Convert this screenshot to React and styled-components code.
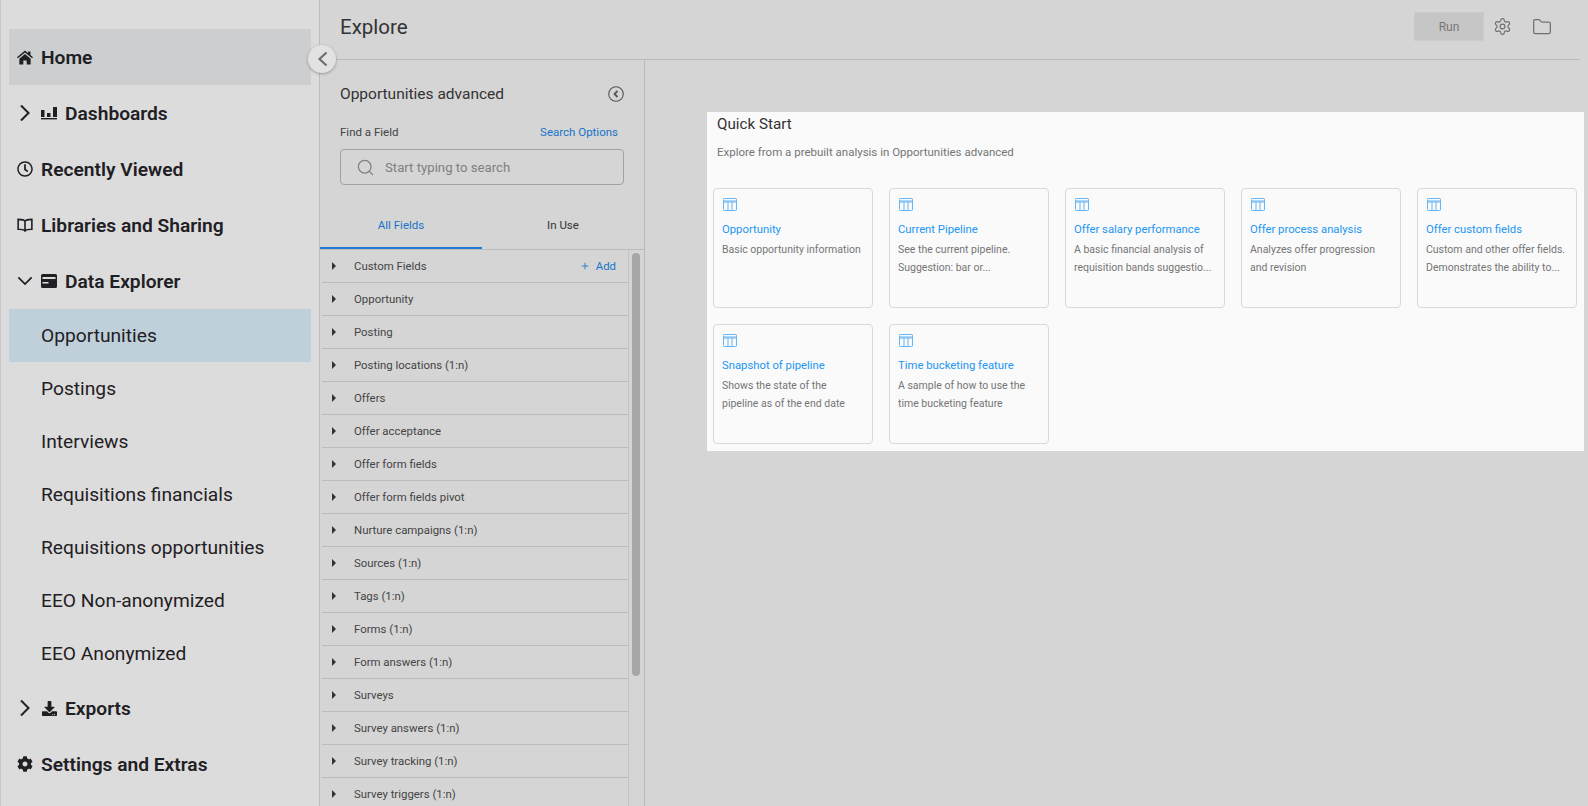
import React from 'react'
import styled, { createGlobalStyle } from 'styled-components'
import { FaRegClock, FaCog, FaDownload } from 'react-icons/fa'
import { LuSearch, LuSettings, LuFolder, LuPlus } from 'react-icons/lu'

const GlobalStyle = createGlobalStyle`
  html, body {
    margin: 0;
    height: 100%;
    overflow: hidden;
    background: #d5d5d5;
    font-family: Roboto, "Liberation Sans", sans-serif;
  }
  #root { height: 100%; }
  * { box-sizing: border-box; }
`

const fields = [
  'Custom Fields', 'Opportunity', 'Posting', 'Posting locations (1:n)', 'Offers', 'Offer acceptance',
  'Offer form fields', 'Offer form fields pivot', 'Nurture campaigns (1:n)', 'Sources (1:n)', 'Tags (1:n)',
  'Forms (1:n)', 'Form answers (1:n)', 'Surveys', 'Survey answers (1:n)', 'Survey tracking (1:n)', 'Survey triggers (1:n)',
]

const cards = [
  { title: 'Opportunity', text: 'Basic opportunity information' },
  { title: 'Current Pipeline', text: 'See the current pipeline. Suggestion: bar or...' },
  { title: 'Offer salary performance', text: 'A basic financial analysis of requisition bands suggestio...' },
  { title: 'Offer process analysis', text: 'Analyzes offer progression and revision' },
  { title: 'Offer custom fields', text: 'Custom and other offer fields. Demonstrates the ability to...' },
  { title: 'Snapshot of pipeline', text: 'Shows the state of the pipeline as of the end date' },
  { title: 'Time bucketing feature', text: 'A sample of how to use the time bucketing feature' },
]

const explores = ['Opportunities', 'Postings', 'Interviews', 'Requisitions financials', 'Requisitions opportunities', 'EEO Non-anonymized', 'EEO Anonymized']

const ChevronRight = () => (
  <svg width="12" height="18" viewBox="0 0 12 18" fill="none" stroke="currentColor" strokeWidth="2">
    <path d="M2 1.500l7.500 7.500-7.500 7.500" />
  </svg>
)

const ChevronDown = () => (
  <svg width="18" height="12" viewBox="0 0 18 12" fill="none" stroke="currentColor" strokeWidth="2">
    <path d="M1.500 2l7.500 7.500 7.500-7.500" />
  </svg>
)

const ChevronLeft = () => (
  <svg width="11" height="16" viewBox="0 0 11 16" fill="none" stroke="currentColor" strokeWidth="2.200">
    <path d="M9.500 1.500l-7 6.500 7 6.500" />
  </svg>
)

const HomeIcon = () => (
  <svg width="17" height="15" viewBox="0 0 17 15" fill="currentColor">
    <path d="M8.500 0l3.300 2.800V1h2.500v3.900L17 7.200l-1 1.200-7.500-6.300L1 8.400 0 7.200zM2.500 8.800l6-5 6 5V15h-4.200v-4.300H6.700V15H2.500z" />
  </svg>
)

const BarsIcon = () => (
  <svg width="16" height="14" viewBox="0 0 16 14" fill="currentColor">
    <rect x="0" y="4" width="3.500" height="7" />
    <rect x="6" y="7" width="3.500" height="4" />
    <rect x="12" y="1" width="4" height="10" />
    <rect x="0" y="12" width="16" height="1.400" />
  </svg>
)

const BookIcon = () => (
  <svg width="17" height="15" viewBox="0 0 17 15" fill="none" stroke="currentColor" strokeWidth="1.700">
    <path d="M8.500 3C7.500 1.500 5.500 1 1.200 1v10.500c4 0 6 .3 7.300 1.800 1.300-1.500 3.300-1.800 7.300-1.800V1C11.500 1 9.500 1.500 8.500 3zM8.500 3v10" />
  </svg>
)

const CardIcon = () => (
  <svg width="16" height="14" viewBox="0 0 16 14" fill="currentColor">
    <path d="M1.500 0h13A1.500 1.500 0 0 1 16 1.500v11a1.500 1.500 0 0 1-1.500 1.500h-13A1.500 1.500 0 0 1 0 12.500v-11A1.500 1.500 0 0 1 1.500 0zM1.500 3v2h13V3zM1.500 8v1.500h6V8z" fillRule="evenodd" />
  </svg>
)

const TableIcon = () => (
  <svg width="14" height="13" viewBox="0 0 14 13" fill="none" stroke="currentColor" strokeWidth="1">
    <rect x="0.500" y="0.500" width="13" height="12" rx="0.800" />
    <path d="M0.500 3h13M0.500 4h13M5 4v8.500M9 4v8.500" />
  </svg>
)

const CircleBack = () => (
  <svg width="16" height="16" viewBox="0 0 16 16" fill="none" stroke="currentColor">
    <circle cx="8" cy="8" r="7.300" strokeWidth="1.100" />
    <path d="M9.500 5l-3 3 3 3" strokeWidth="1.800" />
  </svg>
)

export default function App() {
  return (
    <Page>
      <GlobalStyle />
      <Sidebar>
        <NavRow $active><NavIcon><HomeIcon /></NavIcon>Home</NavRow>
        <NavRow><Caret><ChevronRight /></Caret><NavIcon><BarsIcon /></NavIcon>Dashboards</NavRow>
        <NavRow><NavIcon><FaRegClock size={16} /></NavIcon>Recently Viewed</NavRow>
        <NavRow><NavIcon><BookIcon /></NavIcon>Libraries and Sharing</NavRow>
        <NavRow><Caret><ChevronDown /></Caret><NavIcon><CardIcon /></NavIcon>Data Explorer</NavRow>
        {explores.map((name, i) => <SubRow key={name} $selected={i === 0}>{name}</SubRow>)}
        <NavRow><Caret><ChevronRight /></Caret><NavIcon><FaDownload size={15} /></NavIcon>Exports</NavRow>
        <NavRow><NavIcon><FaCog size={16} /></NavIcon>Settings and Extras</NavRow>
        <Collapse><ChevronLeft /></Collapse>
      </Sidebar>
      <Main>
        <Header>
          <Title>Explore</Title>
          <HeaderTools>
            <RunButton>Run</RunButton>
            <ToolIcon><LuSettings size={19} strokeWidth={1.5} /></ToolIcon>
            <ToolIcon><LuFolder size={20} strokeWidth={1.5} /></ToolIcon>
          </HeaderTools>
        </Header>
        <Body>
          <FieldPanel>
            <PanelHead>
              <PanelTitle>Opportunities advanced</PanelTitle>
              <BackIcon><CircleBack /></BackIcon>
            </PanelHead>
            <FindRow>
              <span>Find a Field</span>
              <BlueLink>Search Options</BlueLink>
            </FindRow>
            <SearchBox>
              <LuSearch size={19} strokeWidth={1.6} />
              <span>Start typing to search</span>
            </SearchBox>
            <Tabs>
              <Tab $active>All Fields</Tab>
              <Tab>In Use</Tab>
            </Tabs>
            <FieldArea>
              <FieldList>
                {fields.map((name, i) => (
                  <FieldRow key={name}>
                    <Arrow />
                    <FieldName>{name}</FieldName>
                    {i === 0 && <AddLink><LuPlus size={10} strokeWidth={2} />Add</AddLink>}
                  </FieldRow>
                ))}
              </FieldList>
              <ScrollTrack><ScrollThumb /></ScrollTrack>
            </FieldArea>
          </FieldPanel>
          <Content>
            <QuickStart>
              <QuickTitle>Quick Start</QuickTitle>
              <QuickSub>Explore from a prebuilt analysis in Opportunities advanced</QuickSub>
              <CardGrid>
                {cards.map((card) => (
                  <Card key={card.title}>
                    <CardGlyph><TableIcon /></CardGlyph>
                    <CardTitle>{card.title}</CardTitle>
                    <CardText>{card.text}</CardText>
                  </Card>
                ))}
              </CardGrid>
            </QuickStart>
          </Content>
        </Body>
      </Main>
    </Page>
  )
}

const Page = styled.div`
  display: flex;
  height: 806px;
  overflow: hidden;
  color: #333;
`
const Sidebar = styled.nav`
  position: relative;
  flex: 0 0 320px;
  background: #dcdcdc;
  border-left: 1px solid #c6c6c6;
  border-right: 1px solid #bdbdbd;
  padding: 29px 8px 0 8px;
`
const NavRow = styled.div`
  display: flex;
  align-items: center;
  height: 56px;
  padding: 0.600px 0 0 8px;
  font-size: 19.200px;
  font-weight: 600;
  color: #1f2024;
  background: ${(p) => (p.$active ? '#cdced0' : 'transparent')};
`
const NavIcon = styled.span`
  display: flex;
  justify-content: center;
  width: 16px;
  margin-right: 8px;
`
const Caret = styled.span`
  display: flex;
  justify-content: center;
  width: 16px;
  margin-right: 8px;
`
const SubRow = styled.div`
  display: flex;
  align-items: center;
  height: 53px;
  padding: 0.600px 0 0 32px;
  font-size: 19.200px;
  color: #1f2024;
  background: ${(p) => (p.$selected ? '#bfd0da' : 'transparent')};
`
const Collapse = styled.button`
  position: absolute;
  top: 45px;
  left: 307px;
  width: 28px;
  height: 28px;
  padding: 0;
  border: none;
  border-radius: 50%;
  display: flex;
  align-items: center;
  justify-content: center;
  background: #e2e2e2;
  color: #6f6f6f;
  box-shadow: 0 1px 3px rgba(0, 0, 0, 0.3);
`
const Main = styled.main`
  flex: 1;
  min-width: 0;
  display: flex;
  flex-direction: column;
`
const Header = styled.header`
  flex: 0 0 60px;
  margin-right: 8px;
  display: flex;
  align-items: center;
  justify-content: space-between;
  padding: 0 28px 6px 20px;
  border-bottom: 1px solid #bbb;
`
const Title = styled.h1`
  margin: 0;
  font-size: 20.500px;
  font-weight: 400;
  color: #333;
`
const HeaderTools = styled.div`
  display: flex;
  align-items: center;
  gap: 0;
`
const RunButton = styled.button`
  width: 70px;
  height: 29px;
  border: 1px solid #c5cdd3;
  background: #c6c6c6;
  color: #777;
  font-family: inherit;
  font-size: 12px;
  margin-right: 8px;
`
const ToolIcon = styled.span`
  display: flex;
  justify-content: center;
  width: 20px;
  color: #707070;
  & + & { margin-left: 20px; }
`
const Body = styled.div`
  flex: 1;
  min-height: 0;
  display: flex;
`
const FieldPanel = styled.section`
  flex: 0 0 325px;
  display: flex;
  flex-direction: column;
  border-right: 1px solid #bbb;
  min-height: 0;
`
const PanelHead = styled.div`
  display: flex;
  align-items: center;
  justify-content: space-between;
  margin-top: 22px;
  height: 24px;
  padding: 0 20px;
`
const PanelTitle = styled.h2`
  margin: 0;
  font-size: 15.500px;
  font-weight: 400;
  color: #333;
`
const BackIcon = styled.span`
  display: flex;
  color: #555;
`
const FindRow = styled.div`
  display: flex;
  justify-content: space-between;
  align-items: center;
  margin-top: 16px;
  height: 20px;
  padding: 0 26px 0 20px;
  font-size: 11.500px;
  color: #444;
`
const BlueLink = styled.span`
  color: #1873c9;
`
const SearchBox = styled.div`
  display: flex;
  align-items: center;
  gap: 10px;
  height: 36px;
  margin: 7px 20px 0 20px;
  padding-left: 15px;
  border: 1px solid #a2a2a2;
  border-radius: 4px;
  color: #808080;
  font-size: 13.200px;
`
const Tabs = styled.div`
  display: flex;
  margin-top: 20px;
  height: 45px;
  border-bottom: 1px solid #bcbcbc;
`
const Tab = styled.div`
  flex: 1;
  display: flex;
  align-items: center;
  justify-content: center;
  padding-bottom: 3px;
  font-size: 11.500px;
  color: ${(p) => (p.$active ? '#1873c9' : '#333')};
  border-bottom: 2px solid ${(p) => (p.$active ? '#1f7ad4' : 'transparent')};
`
const FieldArea = styled.div`
  flex: 1;
  min-height: 0;
  display: flex;
  overflow: hidden;
`
const FieldList = styled.div`
  flex: 1;
  padding-left: 2px;
  border-right: 1px solid #c4c4c4;
`
const FieldRow = styled.div`
  display: flex;
  align-items: center;
  height: 33px;
  border-bottom: 1px solid #bcbcbc;
  padding: 0 12px 0 10px;
  font-size: 11.400px;
  color: #444;
`
const Arrow = styled.span`
  width: 0;
  height: 0;
  border-top: 4px solid transparent;
  border-bottom: 4px solid transparent;
  border-left: 4px solid #333;
  margin-right: 18px;
`
const FieldName = styled.span`
  flex: 1;
`
const AddLink = styled.span`
  display: flex;
  align-items: center;
  gap: 6px;
  color: #1873c9;
`
const ScrollTrack = styled.div`
  flex: 0 0 15px;
  padding: 3px 4px 0 3px;
`
const ScrollThumb = styled.div`
  height: 423px;
  background: #a6a6a6;
  border-radius: 4px;
`
const Content = styled.div`
  flex: 1;
  min-width: 0;
  padding: 52px 4px 0 62px;
`
const QuickStart = styled.div`
  height: 339px;
  background: #fafafa;
  padding: 1px 6px 0 6px;
`
const QuickTitle = styled.h3`
  margin: 0 0 0 4px;
  font-size: 15.200px;
  font-weight: 400;
  line-height: 22px;
  color: #333;
`
const QuickSub = styled.p`
  margin: 8px 0 0 4px;
  font-size: 11.500px;
  line-height: 18px;
  color: #757575;
`
const CardGrid = styled.div`
  display: grid;
  grid-template-columns: repeat(5, 160px);
  grid-auto-rows: 120px;
  gap: 16px;
  margin-top: 27px;
`
const Card = styled.div`
  background: #fafafa;
  border: 1px solid #d9d9d9;
  border-radius: 4px;
  padding: 7px 8px;
`
const CardGlyph = styled.div`
  height: 14px;
  margin-left: 1px;
  color: #64b5f6;
`
const CardTitle = styled.div`
  margin-top: 11px;
  font-size: 11.300px;
  line-height: 18px;
  color: #2196f3;
`
const CardText = styled.div`
  margin-top: 2px;
  font-size: 10.500px;
  line-height: 18px;
  color: #757575;
`
